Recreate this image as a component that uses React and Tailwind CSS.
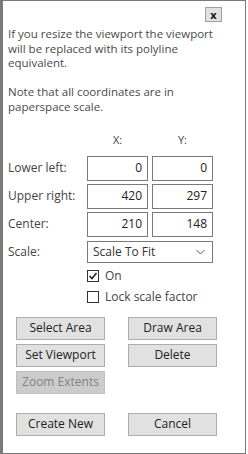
import React, { useState } from "react";

const font = { fontFamily: '"Open Sans", "Noto Sans", sans-serif' };

const Btn = ({ children, disabled }) => (
  <button
    type="button"
    disabled={disabled}
    className={
      disabled
        ? "h-[23px] w-[89px] border border-[#bfbfbf] bg-[#cccccc] text-[12px] text-[#838383]"
        : "h-[23px] w-[89px] border border-[#adadad] bg-[#e1e1e1] text-[12px] text-[#222]"
    }
  >
    {children}
  </button>
);

const NumBox = ({ value }) => (
  <div className="flex h-[25px] w-[61px] items-center justify-end border border-[#7a7a7a] bg-white pr-[5px] text-[12px] text-[#222]">
    {value}
  </div>
);

const Check = ({ checked, label, onClick }) => (
  <div className="flex h-[12px] items-center gap-[6px] cursor-default" onClick={onClick}>
    <div className="flex h-[12px] w-[12px] items-center justify-center border border-[#333] bg-white">
      {checked && (
        <svg width="10" height="10" viewBox="0 0 10 10">
          <path d="M1.5 5 L4 7.5 L8.5 2" fill="none" stroke="#222" strokeWidth="1.6" />
        </svg>
      )}
    </div>
    <span className="text-[12px] text-[#444]">{label}</span>
  </div>
);

export default function App() {
  const [on, setOn] = useState(true);
  const [lock, setLock] = useState(false);

  const rows = [
    ["Lower left:", "0", "0"],
    ["Upper right:", "420", "297"],
    ["Center:", "210", "148"],
  ];

  return (
    <div style={font} className="h-[454px] w-[248px] bg-white">
      <div className="h-[454px] w-[246px] border border-l-[3px] border-[#7a7a7a] bg-white">
        <div className="flex justify-end pr-[23px] pt-[6px]">
          <button
            type="button"
            className="flex h-[15px] w-[17px] items-center justify-center border border-[#a0a0a0] bg-[#e1e1e1] text-[11px] font-bold leading-none text-[#111]"
          >
            x
          </button>
        </div>

        <div className="mt-[5px] whitespace-nowrap pl-[5px] text-[11.5px] leading-[14.5px] text-[#4a4a4a]">
          <p>
            If you resize the viewport the viewport
            <br />
            will be replaced with its polyline
            <br />
            equivalent.
          </p>
          <p className="mt-[14.5px]">
            Note that all coordinates are in
            <br />
            paperspace scale.
          </p>
        </div>

        <div className="mt-[18px] flex pl-[84px] text-[11px] text-[#444]">
          <div className="w-[61px] text-center">X:</div>
          <div className="ml-[4px] w-[61px] text-center">Y:</div>
        </div>

        <div className="mt-[7px] flex flex-col gap-[3px] pl-[5px]">
          {rows.map(([label, x, y]) => (
            <div key={label} className="flex items-center">
              <div className="w-[79px] text-[12px] text-[#444]">{label}</div>
              <NumBox value={x} />
              <div className="w-[4px]" />
              <NumBox value={y} />
            </div>
          ))}
        </div>

        <div className="mt-[4px] flex items-center pl-[5px]">
          <div className="w-[79px] text-[12px] text-[#444]">Scale:</div>
          <div className="flex h-[22px] w-[126px] items-center justify-between border border-[#7a7a7a] bg-white pl-[5px] pr-[7px] text-[12px] text-[#333]">
            <span>Scale To Fit</span>
            <svg width="9" height="6" viewBox="0 0 9 6">
              <path d="M0.5 1 L4.5 5 L8.5 1" fill="none" stroke="#555" strokeWidth="1" />
            </svg>
          </div>
        </div>

        <div className="mt-[7px] flex flex-col gap-[9px] pl-[84px]">
          <Check checked={on} label="On" onClick={() => setOn(!on)} />
          <Check checked={lock} label="Lock scale factor" onClick={() => setLock(!lock)} />
        </div>

        <div className="mt-[14px] grid grid-cols-[89px_89px] gap-x-[23px] gap-y-[4px] pl-[13px]">
          <Btn>Select Area</Btn>
          <Btn>Draw Area</Btn>
          <Btn>Set Viewport</Btn>
          <Btn>Delete</Btn>
          <Btn disabled>Zoom Extents</Btn>
        </div>

        <div className="mt-[19px] grid grid-cols-[89px_89px] gap-x-[23px] pl-[13px]">
          <Btn>Create New</Btn>
          <Btn>Cancel</Btn>
        </div>
      </div>
    </div>
  );
}
